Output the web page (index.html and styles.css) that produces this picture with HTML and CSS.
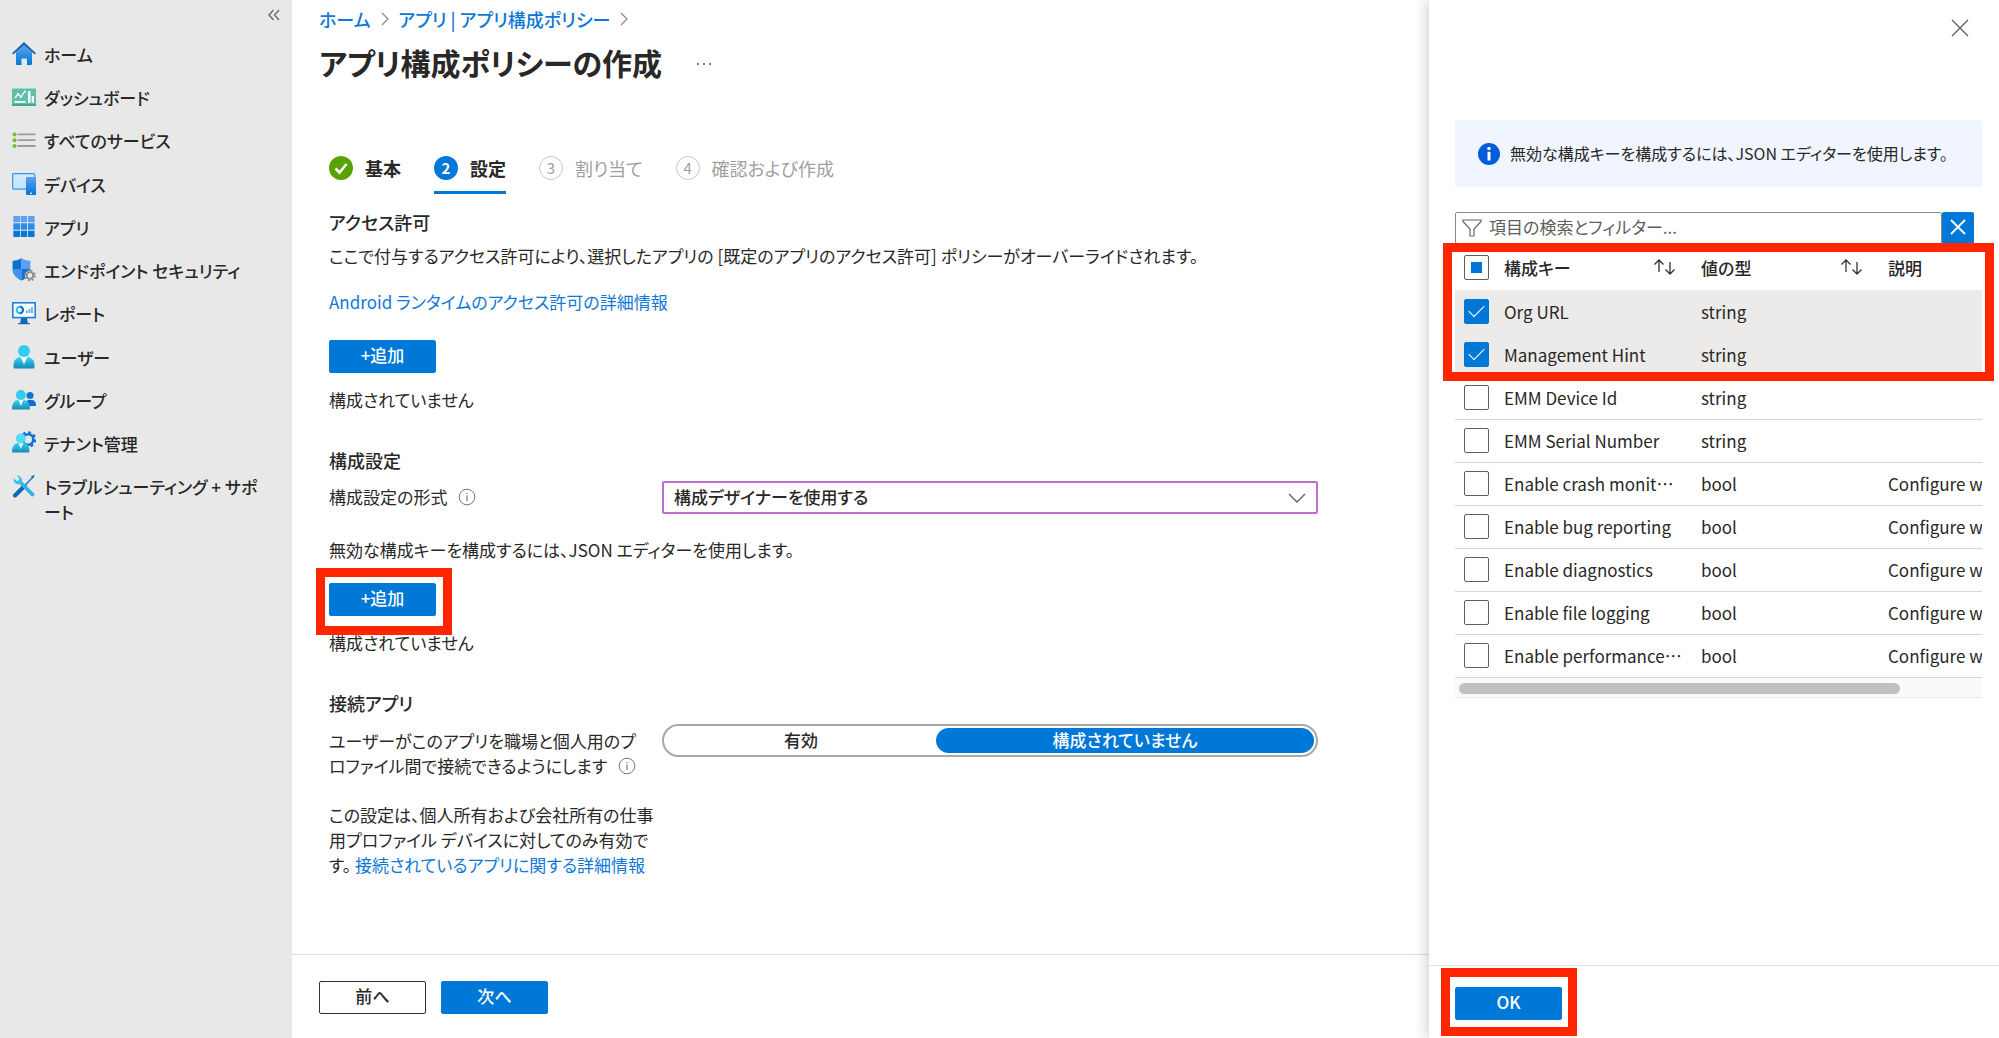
FILE: index.html
```html
<!DOCTYPE html>
<html lang="ja">
<head>
  <meta charset="UTF-8" />
  <meta name="viewport" content="width=device-width, initial-scale=1.0"/>
  <title>アプリ構成ポリシーの作成</title>
  <link rel="stylesheet" href="styles.css">
</head>
<body>
  <!-- shared gradients -->
  <svg class="defs" aria-hidden="true">
    <defs>
      <linearGradient id="blue" x1="0" y1="0" x2="0" y2="1"><stop offset="0" stop-color="#5ea0ef"/><stop offset="1" stop-color="#0078d4"/></linearGradient>
      <linearGradient id="cyan" x1="0" y1="0" x2="0" y2="1"><stop offset="0" stop-color="#32d4f5"/><stop offset="1" stop-color="#198ab3"/></linearGradient>
      <linearGradient id="pale" x1="0" y1="0" x2="0" y2="1"><stop offset="0" stop-color="#d2ebff"/><stop offset="1" stop-color="#bfe3fb"/></linearGradient>
    </defs>
  </svg>

  <div class="layout">
    <nav class="sidebar">
      <button class="collapse" aria-label="折りたたむ">
        <svg width="12" height="12" viewBox="0 0 12 12"><path d="M5.5 1 1 6l4.500 5M11 1 6.500 6l4.500 5" fill="none" stroke="#666" stroke-width="1.300"/></svg>
      </button>
      <ul>
        <li><a href="#">
          <svg viewBox="0 0 24 24"><path d="M4 10.500 12 3l8 7.500V22a1 1 0 0 1-1 1h-4v-6.500H9.500V23H5a1 1 0 0 1-1-1z" fill="url(#blue)"/><path d="M12 0 0 11.300 1.300 12.600 12 3.200l10.700 9.400 1.300-1.300z" fill="#1a67b0"/></svg>
          ホーム</a></li>
        <li><a href="#">
          <svg viewBox="0 0 24 24"><rect y="3.500" width="24" height="17.500" rx="1" fill="#5fbfad"/><path d="M0 19h24v1a1 1 0 0 1-1 1H1a1 1 0 0 1-1-1z" fill="#48a592"/><path d="m3 13 3-4 3 3 4-6" fill="none" stroke="#fff" stroke-width="1.300"/><circle cx="6" cy="9" r="1" fill="#fff"/><circle cx="9" cy="12" r="1" fill="#fff"/><circle cx="13" cy="6.500" r="1" fill="#fff"/><path d="M2.500 16h11v1.700h-11zM16 6h2.500v11.700H16zM19.700 11H22v6.700h-2.300z" fill="#fff"/></svg>
          ダッシュボード</a></li>
        <li><a href="#">
          <svg viewBox="0 0 24 24"><path d="M5.500 5.500h18v1.800h-18zM5.500 11.300h18v1.800h-18zM5.500 17.100h18v1.800h-18z" fill="#9b9b9b"/><g fill="#76bc2d"><circle cx="2.500" cy="6.400" r="2"/><circle cx="2.500" cy="12.200" r="2"/><circle cx="2.500" cy="18" r="2"/></g></svg>
          すべてのサービス</a></li>
      </ul>
      <ul>
        <li><a href="#">
          <svg viewBox="0 0 24 24"><rect x=".6" y="1.600" width="22" height="15.500" rx="1" fill="url(#pale)" stroke="#3a96ea" stroke-width="1.300"/><rect x="14" y="5" width="10" height="18" rx="1" fill="url(#blue)"/><rect x="18" y="20.600" width="2" height="1.500" fill="#b8defa"/></svg>
          デバイス</a></li>
        <li><a href="#">
          <svg viewBox="0 0 24 24"><path d="M2 1h6.300v6.300H1.300V1.700A.7.700 0 0 1 2 1zM9 1h6v6.300H9zM15.900 1h6a.7.700 0 0 1 .7.700v5.600h-6.700z" fill="#5ea0ef"/><path d="M1.300 8.300h6.900v6.400H1.300zM9 8.300h6v6.400H9zM15.900 8.300h6.700v6.400h-6.700z" fill="#2f8ce4"/><path d="M1.300 15.700h6.900V22H2a.7.700 0 0 1-.7-.7zM9 15.700h6V22H9zM15.900 15.700h6.700v5.600a.7.700 0 0 1-.7.700h-6z" fill="#0078d4"/></svg>
          アプリ</a></li>
        <li><a href="#">
          <svg viewBox="0 0 24 24"><path d="M9.500 0C7 2 4 2.600.6 2.700V11c0 6 5 9.500 8.900 11.500z" fill="#0f6fd0"/><path d="M9.500 0C12 2 15 2.600 18.400 2.700V11c0 6-5 9.500-8.900 11.500z" fill="#5ea0ef"/><path d="M9.500 11h8.900c0 6-5 9.500-8.900 11.500z" fill="#1472d0"/><path d="M.6 11h8.900v11.500C5.500 20.500.6 17 .6 11z" fill="#4494ea"/><circle cx="18" cy="17.500" r="5" fill="#e8e8e8"/><circle cx="18" cy="17.500" r="3.300" fill="none" stroke="#8a8a8a" stroke-width="1.800"/><circle cx="18" cy="17.500" r="4.900" fill="none" stroke="#8a8a8a" stroke-width="1.800" stroke-dasharray="1.950 1.900"/></svg>
          エンドポイント セキュリティ</a></li>
        <li><a href="#">
          <svg viewBox="0 0 24 24"><path d="M9 17h6l.8 5H18v1.200H6V22h2.200z" fill="#1a67b0"/><rect x=".8" y="1.800" width="22.400" height="14.800" fill="#f5fbff" stroke="#1f80d8" stroke-width="1.600"/><circle cx="7.800" cy="9" r="3.200" fill="none" stroke="#32bff0" stroke-width="2"/><path d="M7.800 5.800A3.200 3.200 0 0 1 7.800 12.200" fill="none" stroke="#1670c8" stroke-width="2"/><path d="M14 9.500h1.700V12H14zM16.600 8h1.700v4h-1.700zM19.200 6h1.600v6h-1.600z" fill="#5aa9e8"/></svg>
          レポート</a></li>
      </ul>
      <ul>
        <li><a href="#">
          <svg viewBox="0 0 24 24"><path d="M1.500 22V20c0-5 3.500-8 7.500-8h6c4 0 7.500 3 7.500 8v2a1.500 1.500 0 0 1-1.500 1.500H3A1.500 1.500 0 0 1 1.500 22z" fill="url(#cyan)"/><path d="m8.500 12 3.500 7.500 3.500-7.500z" fill="#e6f9fd"/><circle cx="12" cy="6" r="6" fill="#32cdec"/></svg>
          ユーザー</a></li>
        <li><a href="#">
          <svg viewBox="0 0 24 24"><path d="M13 18c0-4 1.500-6 4-6h3c2.500 0 4 2 4 5 0 .6-.4 1-1 1z" fill="#0a6fd0"/><circle cx="18" cy="7.500" r="3.500" fill="#0f74d4"/><path d="M0 20.500C0 15 3 12 6 12h5.500c3.500 0 6.500 3 6.500 8.500 0 .6-.5 1-1 1H1c-.6 0-1-.4-1-1z" fill="url(#cyan)"/><path d="m6.500 12 2.400 6 2.600-6z" fill="#e6f9fd"/><circle cx="8.900" cy="7" r="5" fill="#32cdec"/></svg>
          グループ</a></li>
        <li><a href="#">
          <svg viewBox="0 0 24 24"><circle cx="16" cy="8.500" r="5.300" fill="none" stroke="#0f74d4" stroke-width="2.600"/><circle cx="16" cy="8.500" r="7.200" fill="none" stroke="#0f74d4" stroke-width="2.200" stroke-dasharray="2.850 2.800"/><path d="M0 20.500C0 15 3 12 6 12h5.500c3.500 0 6 3 6 8.500 0 .6-.5 1-1 1H1c-.6 0-1-.4-1-1z" fill="url(#cyan)"/><path d="m6.500 12 2.300 6 2.600-6z" fill="#e6f9fd"/><circle cx="8.900" cy="7.500" r="5" fill="#50dcf5"/></svg>
          テナント管理</a></li>
        <li><a href="#">
          <svg viewBox="0 0 24 24"><path d="m3 21.500 9.500-9.500" stroke="#0f64b4" stroke-width="4" stroke-linecap="round"/><path d="m12 12.500 9-9.500" stroke="#2f86cc" stroke-width="1.800"/><path d="m19 2.500 3-1.500.6.600-1.600 3z" fill="#1a67b0"/><path d="m8 8 12.500 12.500" stroke="#2fb4e0" stroke-width="3.800" stroke-linecap="round"/><path d="M4.500 1.500 7.300 4.300 6.800 6.500 4.600 7 1.800 4.300C1 7 2.600 10 5.800 10.200L9 10l1-1.200C10.700 5 8.600.8 4.500 1.500z" fill="#32c5ea"/></svg>
          トラブルシューティング + サポート</a></li>
      </ul>
    </nav>

    <main class="main">
      <div class="content">
        <div class="breadcrumb">
          <a href="#">ホーム</a>
          <svg width="8" height="14" viewBox="0 0 8 14"><path d="m1 1 6 6-6 6" fill="none" stroke="#8a8886" stroke-width="1.200"/></svg>
          <a href="#">アプリ | アプリ構成ポリシー</a>
          <svg width="8" height="14" viewBox="0 0 8 14"><path d="m1 1 6 6-6 6" fill="none" stroke="#8a8886" stroke-width="1.200"/></svg>
        </div>
        <div class="title">
          <h1>アプリ構成ポリシーの作成</h1>
          <button class="more" aria-label="その他"><i></i><i></i><i></i></button>
        </div>

        <div class="form">
          <ol class="steps">
            <li class="done">
              <span class="num"><svg width="24" height="24" viewBox="0 0 24 24"><path d="m6.500 12.500 4 4 7-8.500" fill="none" stroke="#fff" stroke-width="2.600"/></svg></span>基本</li>
            <li class="current"><span class="num">2</span>設定</li>
            <li><span class="num">3</span>割り当て</li>
            <li><span class="num">4</span>確認および作成</li>
          </ol>

          <h3>アクセス許可</h3>
          <p class="lead">ここで付与するアクセス許可により、選択したアプリの [既定のアプリのアクセス許可] ポリシーがオーバーライドされます。</p>
          <p class="more-info"><a href="#">Android ランタイムのアクセス許可の詳細情報</a></p>
          <button class="btn primary add">+追加</button>
          <p class="status">構成されていません</p>

          <h3 class="section">構成設定</h3>
          <div class="row">
            <label for="format">構成設定の形式
              <svg class="hint" width="18" height="18" viewBox="0 0 18 18"><circle cx="9" cy="9" r="7.800" fill="none" stroke="#777" stroke-width="1"/><path d="M9 7.500v5.500M9 5v1.300" stroke="#777" stroke-width="1.200"/></svg>
            </label>
            <div class="select">
              <select id="format"><option>構成デザイナーを使用する</option></select>
              <svg width="18" height="10" viewBox="0 0 18 10"><path d="m1 1 8 8 8-8" fill="none" stroke="#605e5c" stroke-width="1.300"/></svg>
            </div>
          </div>
          <p class="json">無効な構成キーを構成するには、JSON エディターを使用します。</p>
          <div class="marked">
            <button class="btn primary">+追加</button>
            <span class="mark"></span>
          </div>
          <p class="status">構成されていません</p>

          <h3 class="section">接続アプリ</h3>
          <div class="row">
            <div class="text" id="connect-label">ユーザーがこのアプリを職場と個人用のプロファイル間で接続できるようにします
              <svg class="hint" width="18" height="18" viewBox="0 0 18 18"><circle cx="9" cy="9" r="7.800" fill="none" stroke="#777" stroke-width="1"/><path d="M9 7.500v5.500M9 5v1.300" stroke="#777" stroke-width="1.200"/></svg>
            </div>
            <div class="toggle" role="radiogroup" aria-labelledby="connect-label">
              <input type="radio" name="connect" id="connect-on"><label for="connect-on">有効</label>
              <input type="radio" name="connect" id="connect-off" checked><label for="connect-off">構成されていません</label>
            </div>
          </div>
          <p class="note">この設定は、個人所有および会社所有の仕事用プロファイル デバイスに対してのみ有効です。 <a href="#">接続されているアプリに関する詳細情報</a></p>
        </div>
      </div>
      <div class="footer">
        <button class="btn">前へ</button>
        <button class="btn primary">次へ</button>
      </div>
    </main>

    <aside class="panel">
      <div class="panel-head">
        <button class="close" aria-label="閉じる">
          <svg width="18" height="18" viewBox="0 0 18 18"><path d="m1 1 16 16M17 1 1 17" stroke="#605e5c" stroke-width="1.300"/></svg>
        </button>
      </div>
      <div class="panel-body">
        <div class="info">
          <svg width="22" height="22" viewBox="0 0 22 22"><circle cx="11" cy="11" r="11" fill="#015cda"/><circle cx="11" cy="5.500" r="1.800" fill="#fff"/><path d="M9.500 8.800h3v8.700h-3z" fill="#fff"/></svg>
          無効な構成キーを構成するには、JSON エディターを使用します。
        </div>
        <div class="filter">
          <svg width="20" height="18" viewBox="0 0 20 18"><path d="M1 1h18v1.500l-7 7.500v7H8v-7L1 2.500z" fill="none" stroke="#666" stroke-width="1.200"/></svg>
          <input type="text" placeholder="項目の検索とフィルター..." aria-label="項目の検索とフィルター">
          <button aria-label="クリア">
            <svg width="16" height="16" viewBox="0 0 16 16"><path d="m1 1 14 14M15 1 1 15" stroke="#fff" stroke-width="1.800"/></svg>
          </button>
        </div>
        <div class="keys">
          <table>
            <colgroup><col class="c-check"><col class="c-key"><col class="c-type"><col></colgroup>
            <thead>
              <tr>
                <th><input type="checkbox" class="partial" aria-label="すべて選択"></th>
                <th><div>構成キー <svg width="24" height="18" viewBox="0 0 24 18"><path d="M6 14V2M1.500 6.500 6 2l4.500 4.500M17 4v12M12.500 11.500 17 16l4.500-4.500" fill="none" stroke="#323130" stroke-width="1.300"/></svg></div></th>
                <th><div>値の型 <svg width="24" height="18" viewBox="0 0 24 18"><path d="M6 14V2M1.500 6.500 6 2l4.500 4.500M17 4v12M12.500 11.500 17 16l4.500-4.500" fill="none" stroke="#323130" stroke-width="1.300"/></svg></div></th>
                <th>説明</th>
              </tr>
            </thead>
            <tbody>
              <tr class="selected"><td><input type="checkbox" id="k1" checked></td><td><label for="k1">Org URL</label></td><td>string</td><td></td></tr>
              <tr class="selected"><td><input type="checkbox" id="k2" checked></td><td><label for="k2">Management Hint</label></td><td>string</td><td></td></tr>
              <tr><td><input type="checkbox" id="k3"></td><td><label for="k3">EMM Device Id</label></td><td>string</td><td></td></tr>
              <tr><td><input type="checkbox" id="k4"></td><td><label for="k4">EMM Serial Number</label></td><td>string</td><td></td></tr>
              <tr><td><input type="checkbox" id="k5"></td><td><label for="k5">Enable crash monit…</label></td><td>bool</td><td>Configure w</td></tr>
              <tr><td><input type="checkbox" id="k6"></td><td><label for="k6">Enable bug reporting</label></td><td>bool</td><td>Configure w</td></tr>
              <tr><td><input type="checkbox" id="k7"></td><td><label for="k7">Enable diagnostics</label></td><td>bool</td><td>Configure w</td></tr>
              <tr><td><input type="checkbox" id="k8"></td><td><label for="k8">Enable file logging</label></td><td>bool</td><td>Configure w</td></tr>
              <tr><td><input type="checkbox" id="k9"></td><td><label for="k9">Enable performance…</label></td><td>bool</td><td>Configure w</td></tr>
            </tbody>
          </table>
          <div class="scroll"><div class="thumb"></div></div>
          <span class="mark"></span>
        </div>
      </div>
      <div class="panel-foot">
        <div class="marked">
          <button class="btn primary">OK</button>
          <span class="mark"></span>
        </div>
      </div>
    </aside>
  </div>
</body>
</html>
```
FILE: styles.css
```css
* {
  box-sizing: border-box;
}
body {
  margin: 0;
  font-family: "Noto Sans CJK JP", sans-serif;
  font-size: 17px;
  line-height: 25px;
  font-feature-settings: "palt";
  color: #292827;
  background: #fff;
}
h1, h3, p, ul, ol {
  margin: 0;
  padding: 0;
  list-style: none;
}
a {
  color: #0f78d6;
  text-decoration: none;
}
button, input, select {
  font: inherit;
  font-feature-settings: inherit;
  color: inherit;
  margin: 0;
}
button {
  padding: 0;
  border: none;
  background: none;
  cursor: pointer;
}
.defs {
  position: absolute;
  width: 0;
  height: 0;
}
.layout {
  display: flex;
  min-height: 100vh;
}

/* sidebar */
.sidebar {
  width: 292px;
  flex: none;
  background: #e8e8e8;
}
.collapse {
  display: flex;
  align-items: center;
  height: 30px;
  margin: 0 12px 3px auto;
}
.sidebar ul + ul {
  margin-top: 1px;
}
.sidebar a {
  display: flex;
  align-items: flex-start;
  gap: 8px;
  padding: 9px 24px 9px 12px;
  color: #292827;
  font-weight: 500;
}
.sidebar a svg {
  width: 24px;
  height: 24px;
  flex: none;
}

/* main */
.main {
  flex: 1;
  min-width: 0;
  display: flex;
  flex-direction: column;
}
.content {
  flex: 1;
  padding: 7px 27px 0;
}
.breadcrumb {
  display: flex;
  align-items: center;
  gap: 10px;
  height: 24px;
  font-size: 18px;
  font-weight: 500;
}
.title {
  display: flex;
  align-items: center;
  gap: 35px;
  margin-top: 9px;
}
h1 {
  font-size: 30px;
  line-height: 44px;
  font-weight: 700;
}
.more {
  display: flex;
  gap: 4px;
  padding-top: 4px;
}
.more i {
  width: 2px;
  height: 2px;
  background: #777;
}
.form {
  padding-left: 10px;
}
.steps {
  display: flex;
  gap: 33px;
  margin-top: 71px;
}
.steps li {
  display: flex;
  align-items: center;
  gap: 12px;
  padding-bottom: 10px;
  border-bottom: 3px solid transparent;
  font-size: 18px;
  line-height: 26px;
  color: #a19f9d;
}
.steps .num {
  display: flex;
  align-items: center;
  justify-content: center;
  width: 24px;
  height: 24px;
  border: 1px solid #c8c6c4;
  border-radius: 50%;
  font-size: 15px;
}
.steps .done, .steps .current {
  color: #292827;
  font-weight: 700;
}
.steps .done .num {
  background: #57a300;
  border: none;
}
.steps .current {
  border-bottom-color: #0078d7;
}
.steps .current .num {
  background: #0078d7;
  border: none;
  color: #fff;
}
h3 {
  margin-top: 15px;
  font-size: 18px;
  line-height: 26px;
  font-weight: 500;
}
h3.section {
  margin-top: 35px;
}
.lead {
  margin-top: 8px;
}
.more-info {
  margin-top: 21px;
}
.btn {
  display: block;
  width: 107px;
  height: 33px;
  border: 1px solid #323130;
  border-radius: 2px;
  font-weight: 500;
  line-height: 25px;
  padding-bottom: 4px;
}
.btn.primary {
  background: #0078d7;
  border-color: #0078d7;
  color: #fff;
}
.add {
  margin-top: 26px;
}
.status {
  margin-top: 14px;
}
.row {
  display: grid;
  grid-template-columns: 333px minmax(0, 656px);
  margin-top: 8px;
}
.row > label {
  line-height: 32px;
}
.row .text {
  padding: 4px 16px 0 0;
}
.hint {
  margin-left: 7px;
  vertical-align: -2px;
}
.select {
  position: relative;
}
.select select {
  display: block;
  width: 100%;
  height: 33px;
  padding: 0 10px 2px;
  appearance: none;
  background: #fff;
  border: 2px solid #bd6fcd;
  border-radius: 2px;
  font-weight: 500;
}
.select svg {
  position: absolute;
  right: 12px;
  top: 12px;
  pointer-events: none;
}
.json {
  margin-top: 23px;
}
.marked {
  position: relative;
  width: max-content;
}
.form .marked {
  margin-top: 21px;
}

/* red frame drawn over the element to click */
.mark {
  position: absolute;
  inset: -15px -16px -19px -13px;
  border: 9px solid #ff2600;
  pointer-events: none;
}
.toggle {
  display: grid;
  grid-template-columns: 270fr 378fr;
  height: 33px;
  padding: 2px;
  border: 2px solid #a8a8a8;
  border-radius: 17px;
}
.toggle input {
  position: absolute;
  opacity: 0;
}
.toggle label {
  border-radius: 13px;
  text-align: center;
  font-weight: 500;
  line-height: 23px;
}
.toggle input:checked + label {
  background: #0078d7;
  color: #fff;
}
.note {
  width: 333px;
  margin-top: 24px;
}
.footer {
  display: flex;
  gap: 15px;
  padding: 26px 27px 24px;
  border-top: 1px solid #e1dfdd;
}

/* side panel */
.panel {
  width: 570px;
  flex: none;
  display: flex;
  flex-direction: column;
  background: #fff;
  box-shadow: 0 0 14px rgba(0,0,0,0.25);
}
.panel-head {
  display: flex;
  justify-content: flex-end;
  align-items: flex-start;
  height: 120px;
  padding: 19px 30px;
}
.close {
  display: flex;
}
.panel-body {
  flex: 1;
  padding: 0 17px 0 26px;
}
.info {
  display: flex;
  align-items: center;
  gap: 10px;
  height: 67px;
  padding: 0 23px;
  background: #f0f5ff;
  border-radius: 2px;
  font-size: 16px;
  white-space: nowrap;
}
.filter {
  display: flex;
  position: relative;
  margin: 25px 8px 0 0;
}
.filter > svg {
  position: absolute;
  left: 7px;
  top: 7px;
}
.filter input {
  flex: 1;
  min-width: 0;
  height: 32px;
  padding: 0 8px 4px 33px;
  border: 1px solid #8a8886;
  border-radius: 2px;
}
.filter input::placeholder {
  color: #605e5c;
}
.filter button {
  display: flex;
  align-items: center;
  justify-content: center;
  width: 32px;
  padding-bottom: 3px;
  background: #0078d7;
  border-radius: 2px;
}
.keys {
  position: relative;
}
.keys .mark {
  inset: -1px -12px auto -12px;
  height: 138px;
}
table {
  width: 100%;
  table-layout: fixed;
  border-collapse: collapse;
}
.c-check {
  width: 49px;
}
.c-key {
  width: 197px;
}
.c-type {
  width: 187px;
}
th, td {
  height: 43px;
  padding: 0;
  text-align: left;
  white-space: nowrap;
  overflow: hidden;
  border-bottom: 1px solid #d8d6d4;
}
th {
  height: 46px;
  font-weight: 500;
  border: none;
}
th div {
  display: flex;
  align-items: center;
  justify-content: space-between;
  padding-right: 24px;
}
.selected td {
  background: #edebe9;
  border: none;
}
input[type="checkbox"] {
  display: flex;
  align-items: center;
  justify-content: center;
  appearance: none;
  width: 25px;
  height: 25px;
  margin-left: 9px;
  background: #fff;
  border: 1px solid #605e5c;
  border-radius: 2px;
}
input[type="checkbox"]:checked {
  background: #0078d7;
  border-color: #0078d7;
}
input[type="checkbox"]:checked::after {
  content: "";
  width: 14px;
  height: 7px;
  margin-bottom: 5px;
  border: solid #fff;
  border-width: 0 0 1px 1px;
  transform: rotate(-45deg);
}
input.partial::after {
  content: "";
  width: 11px;
  height: 11px;
  background: #0078d7;
}
.scroll {
  height: 20px;
  padding: 5px 4px;
  background: #fafafa;
  border-bottom: 1px solid #ececec;
}
.thumb {
  width: 85%;
  height: 11px;
  background: #c1c1c1;
  border-radius: 6px;
}
.panel-foot {
  padding: 21px 26px 18px;
  border-top: 1px solid #e1dfdd;
}
.panel-foot .mark {
  inset: -19px -15px -16px -14px;
}
```
